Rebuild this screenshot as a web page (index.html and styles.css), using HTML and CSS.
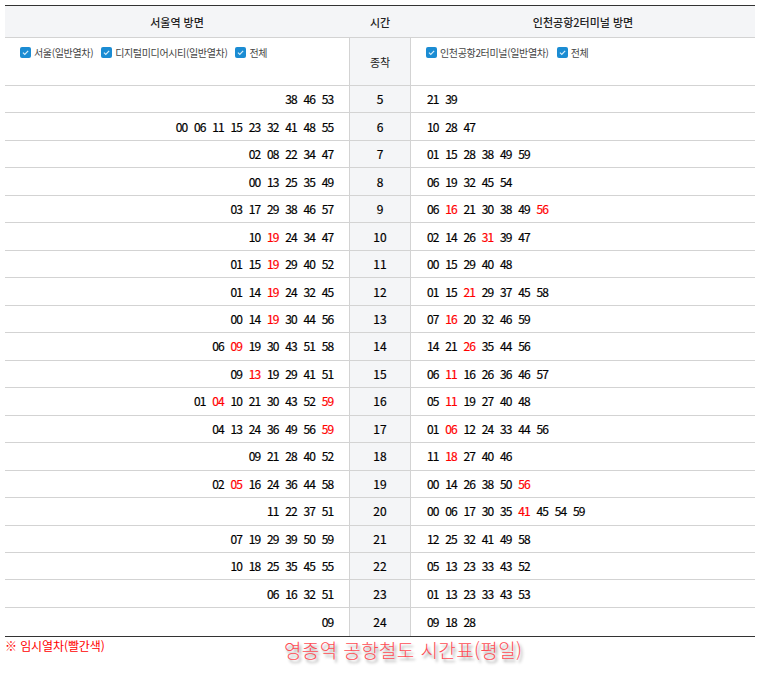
FILE: index.html
```html
<!DOCTYPE html>
<html lang="ko">
<head>
<meta charset="utf-8">
<title>영종역 공항철도 시간표(평일)</title>
<link rel="stylesheet" href="styles.css">
</head>
<body>
<svg class="defs" width="0" height="0" aria-hidden="true"><symbol id="chk" viewBox="0 0 12 12"><rect width="12" height="12" rx="2.2" fill="#1b8cd3"/><path d="M3.2 6.2 5.2 8.1 8.9 4.2" fill="none" stroke="#d8eefa" stroke-width="1.3"/></symbol></svg>
<table class="tt">
<colgroup><col class="c-side"><col class="c-mid"><col class="c-side"></colgroup>
<thead>
<tr class="h1"><th>서울역 방면</th><th>시간</th><th>인천공항2터미널 방면</th></tr>
<tr class="h2">
<td class="filters"><label><svg class="cb"><use href="#chk"/></svg>서울(일반열차)</label><label><svg class="cb"><use href="#chk"/></svg>디지털미디어시티(일반열차)</label><label><svg class="cb"><use href="#chk"/></svg>전체</label></td>
<td class="hour term">종착</td>
<td class="filters right"><label><svg class="cb"><use href="#chk"/></svg>인천공항2터미널(일반열차)</label><label><svg class="cb"><use href="#chk"/></svg>전체</label></td>
</tr>
</thead>
<tbody>
<tr><td class="l"><i>38</i><i>46</i><i>53</i></td><td class="hour">5</td><td class="r"><i>21</i><i>39</i></td></tr>
<tr><td class="l"><i>00</i><i>06</i><i>11</i><i>15</i><i>23</i><i>32</i><i>41</i><i>48</i><i>55</i></td><td class="hour">6</td><td class="r"><i>10</i><i>28</i><i>47</i></td></tr>
<tr><td class="l"><i>02</i><i>08</i><i>22</i><i>34</i><i>47</i></td><td class="hour">7</td><td class="r"><i>01</i><i>15</i><i>28</i><i>38</i><i>49</i><i>59</i></td></tr>
<tr><td class="l"><i>00</i><i>13</i><i>25</i><i>35</i><i>49</i></td><td class="hour">8</td><td class="r"><i>06</i><i>19</i><i>32</i><i>45</i><i>54</i></td></tr>
<tr><td class="l"><i>03</i><i>17</i><i>29</i><i>38</i><i>46</i><i>57</i></td><td class="hour">9</td><td class="r"><i>06</i><i class="x">16</i><i>21</i><i>30</i><i>38</i><i>49</i><i class="x">56</i></td></tr>
<tr><td class="l"><i>10</i><i class="x">19</i><i>24</i><i>34</i><i>47</i></td><td class="hour">10</td><td class="r"><i>02</i><i>14</i><i>26</i><i class="x">31</i><i>39</i><i>47</i></td></tr>
<tr><td class="l"><i>01</i><i>15</i><i class="x">19</i><i>29</i><i>40</i><i>52</i></td><td class="hour">11</td><td class="r"><i>00</i><i>15</i><i>29</i><i>40</i><i>48</i></td></tr>
<tr><td class="l"><i>01</i><i>14</i><i class="x">19</i><i>24</i><i>32</i><i>45</i></td><td class="hour">12</td><td class="r"><i>01</i><i>15</i><i class="x">21</i><i>29</i><i>37</i><i>45</i><i>58</i></td></tr>
<tr><td class="l"><i>00</i><i>14</i><i class="x">19</i><i>30</i><i>44</i><i>56</i></td><td class="hour">13</td><td class="r"><i>07</i><i class="x">16</i><i>20</i><i>32</i><i>46</i><i>59</i></td></tr>
<tr><td class="l"><i>06</i><i class="x">09</i><i>19</i><i>30</i><i>43</i><i>51</i><i>58</i></td><td class="hour">14</td><td class="r"><i>14</i><i>21</i><i class="x">26</i><i>35</i><i>44</i><i>56</i></td></tr>
<tr><td class="l"><i>09</i><i class="x">13</i><i>19</i><i>29</i><i>41</i><i>51</i></td><td class="hour">15</td><td class="r"><i>06</i><i class="x">11</i><i>16</i><i>26</i><i>36</i><i>46</i><i>57</i></td></tr>
<tr><td class="l"><i>01</i><i class="x">04</i><i>10</i><i>21</i><i>30</i><i>43</i><i>52</i><i class="x">59</i></td><td class="hour">16</td><td class="r"><i>05</i><i class="x">11</i><i>19</i><i>27</i><i>40</i><i>48</i></td></tr>
<tr><td class="l"><i>04</i><i>13</i><i>24</i><i>36</i><i>49</i><i>56</i><i class="x">59</i></td><td class="hour">17</td><td class="r"><i>01</i><i class="x">06</i><i>12</i><i>24</i><i>33</i><i>44</i><i>56</i></td></tr>
<tr><td class="l"><i>09</i><i>21</i><i>28</i><i>40</i><i>52</i></td><td class="hour">18</td><td class="r"><i>11</i><i class="x">18</i><i>27</i><i>40</i><i>46</i></td></tr>
<tr><td class="l"><i>02</i><i class="x">05</i><i>16</i><i>24</i><i>36</i><i>44</i><i>58</i></td><td class="hour">19</td><td class="r"><i>00</i><i>14</i><i>26</i><i>38</i><i>50</i><i class="x">56</i></td></tr>
<tr><td class="l"><i>11</i><i>22</i><i>37</i><i>51</i></td><td class="hour">20</td><td class="r"><i>00</i><i>06</i><i>17</i><i>30</i><i>35</i><i class="x">41</i><i>45</i><i>54</i><i>59</i></td></tr>
<tr><td class="l"><i>07</i><i>19</i><i>29</i><i>39</i><i>50</i><i>59</i></td><td class="hour">21</td><td class="r"><i>12</i><i>25</i><i>32</i><i>41</i><i>49</i><i>58</i></td></tr>
<tr><td class="l"><i>10</i><i>18</i><i>25</i><i>35</i><i>45</i><i>55</i></td><td class="hour">22</td><td class="r"><i>05</i><i>13</i><i>23</i><i>33</i><i>43</i><i>52</i></td></tr>
<tr><td class="l"><i>06</i><i>16</i><i>32</i><i>51</i></td><td class="hour">23</td><td class="r"><i>01</i><i>13</i><i>23</i><i>33</i><i>43</i><i>53</i></td></tr>
<tr class="last"><td class="l"><i>09</i></td><td class="hour">24</td><td class="r"><i>09</i><i>18</i><i>28</i></td></tr>
</tbody>
</table>
<div class="foot">
<p class="note">※ 임시열차(빨간색)</p>
<p class="caption">영종역 공항철도 시간표(평일)</p>
</div>
</body>
</html>
```
FILE: styles.css
```css
html, body { margin: 0; padding: 0; background: #fff; }
body { width: 758px; height: 679px; overflow: hidden; padding: 5px 3px 0 5px; box-sizing: border-box; font-family: "Noto Sans CJK KR", "Noto Sans", sans-serif; color: #000; }
.defs { position: absolute; }
.tt { width: 750px; table-layout: fixed; border-collapse: separate; border-spacing: 0; border-top: 1px solid #333; border-bottom: 1px solid #333; }
.c-side { width: 344px; }
.c-mid { width: 62px; }
th, td { padding: 0; font-weight: 400; box-sizing: border-box; }
.h1 th { height: 32px; background: #f4f5f7; font-size: 11px; font-weight: 500; text-align: center; border-bottom: 1px solid #d3d3d3; color: #222; }
.h2 td { height: 48px; border-bottom: 1px solid #d3d3d3; vertical-align: top; }
.h2 .term { vertical-align: middle; }
.filters { padding: 8px 0 0 15px; font-size: 10px; letter-spacing: -.35px; color: #444; }
.filters label { display: inline-flex; align-items: center; gap: 3px; margin-right: 8px; line-height: 13px; }
.cb { width: 11px; height: 11px; }
.hour { background: #f4f5f7; text-align: center; border-left: 1px solid #d3d3d3; border-right: 1px solid #d3d3d3; font-size: 12px; vertical-align: middle; }
.term { font-size: 11px; color: #222; }
tbody td { height: 27.47px; border-bottom: 1px solid #d3d3d3; font-size: 12px; line-height: 14px; -webkit-text-stroke: .2px #000; }
tbody td.hour { font-size: 12px; }
tbody .x { -webkit-text-stroke-color: #f00; }
tbody .last td { height: 28px; border-bottom: 0; }
i { font-style: normal; display: inline-block; width: 18.25px; text-align: left; letter-spacing: -.9px; }
.l { text-align: right; padding-right: 9px; }
.r { padding-left: 16px; }
.x { color: #f00; }
.foot { display: flex; }
.note { margin: 1px 0 0; width: 279px; font-size: 12px; line-height: 16px; letter-spacing: -.1px; color: #f00; flex: none; }
.caption { margin: 0; font-size: 19px; line-height: 26px; letter-spacing: .38px; font-weight: 300; color: #ff4d55; text-shadow: 2px 3px 3px rgba(0,0,0,.42); }
```
